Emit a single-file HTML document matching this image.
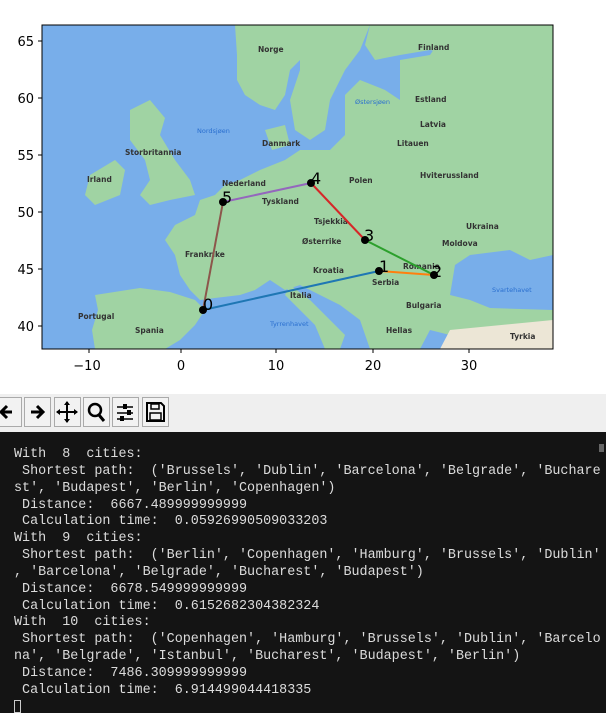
<!DOCTYPE html>
<html><head><meta charset="utf-8"><style>
html,body{margin:0;padding:0;width:606px;height:713px;overflow:hidden;background:#fff;font-family:"DejaVu Sans","Liberation Sans",sans-serif}
#tb{position:absolute;left:0;top:394px;width:606px;height:38px;background:#efefef}
.b{position:absolute;top:3px;width:27px;height:30px;border:1px solid #aaa;background:#f2f2f2;box-sizing:border-box}
#term{position:absolute;left:0;top:432px;width:606px;height:281px;background:#141414;color:#dcdcdc;font-family:"Liberation Mono","DejaVu Sans Mono",monospace;font-size:13.4px;line-height:16.85px;white-space:pre;padding:15px 0 0 14px;box-sizing:border-box}
#sb{position:absolute;right:2px;top:444px;width:5px;height:8px;background:#666}
#cur{display:inline-block;width:7px;height:13px;border:1px solid #ccc;box-sizing:border-box;vertical-align:-2px}
</style></head><body>
<svg width="606" height="394" style="position:absolute;left:0;top:0" font-family="DejaVu Sans, sans-serif">
<defs><clipPath id="c"><rect x="42" y="25" width="511" height="324"/></clipPath></defs>
<g clip-path="url(#c)">
<rect x="42" y="25" width="511" height="324" fill="#78aeea"/>
<g fill="#a0d3a3">
<polygon points="95,295 140,288 170,292 195,300 205,310 195,325 180,340 165,349 95,349 92,330 98,310"/>
<polygon points="165,240 175,225 195,215 200,200 215,195 225,185 240,180 260,170 285,160 300,150 330,150 345,135 345,95 360,80 385,90 400,100 400,60 430,55 440,40 470,45 500,60 520,70 553,80 553,255 530,260 510,250 470,255 455,265 450,295 470,300 490,308 553,310 553,349 520,349 450,335 430,330 420,349 370,349 360,320 340,305 320,295 300,285 285,290 270,280 255,290 240,295 215,298 200,300 190,290 180,275 175,255"/>
<polygon points="290,285 310,300 330,320 345,335 340,349 325,349 315,325 295,305 285,295"/>
<polygon points="235,25 300,25 310,40 300,60 290,70 285,95 275,110 260,105 245,95 237,80 237,55"/>
<polygon points="300,25 370,25 360,50 345,70 330,100 325,130 310,140 295,130 290,100 300,70"/>
<polygon points="370,25 553,25 553,80 470,60 430,50 400,55 375,60 365,45"/>
<polygon points="265,130 285,125 290,145 272,150"/>
<polygon points="130,110 150,100 165,118 160,135 175,160 190,180 195,195 170,200 150,205 140,195 150,180 145,160 130,140"/>
<polygon points="90,175 115,160 125,170 120,195 95,205 85,195"/>
</g>
<polygon points="450,330 553,320 553,349 440,349" fill="#ece6d6"/>
<g font-size="7.5" font-weight="bold" fill="#333">
<text x="258" y="52">Norge</text><text x="418" y="50">Finland</text><text x="415" y="102">Estland</text><text x="420" y="127">Latvia</text><text x="397" y="146">Litauen</text>
<text x="125" y="155">Storbritannia</text><text x="87" y="182">Irland</text><text x="262" y="146">Danmark</text><text x="349" y="183">Polen</text><text x="420" y="178">Hviterussland</text>
<text x="222" y="186">Nederland</text><text x="262" y="204">Tyskland</text><text x="185" y="257">Frankrike</text><text x="466" y="229">Ukraina</text><text x="442" y="246">Moldova</text>
<text x="314" y="224">Tsjekkia</text><text x="302" y="244">Østerrike</text><text x="313" y="273">Kroatia</text><text x="290" y="298">Italia</text><text x="406" y="308">Bulgaria</text>
<text x="78" y="319">Portugal</text><text x="135" y="333">Spania</text><text x="386" y="333">Hellas</text><text x="510" y="339">Tyrkia</text><text x="403" y="269">Romania</text><text x="372" y="285">Serbia</text>
</g>
<g font-size="6.5" fill="#2a6fcf"><text x="197" y="133">Nordsjøen</text><text x="355" y="104">Østersjøen</text><text x="492" y="292">Svartehavet</text><text x="270" y="326">Tyrrenhavet</text></g>
</g>
<rect x="42" y="25" width="511" height="324" fill="none" stroke="#000" stroke-width="1"/>
<g stroke-width="2" fill="none">
<line x1="203" y1="310" x2="379" y2="271" stroke="#1f77b4"/>
<line x1="379" y1="271" x2="434" y2="275" stroke="#ff7f0e"/>
<line x1="434" y1="275" x2="365" y2="240" stroke="#2ca02c"/>
<line x1="365" y1="240" x2="311" y2="183" stroke="#d62728"/>
<line x1="311" y1="183" x2="223" y2="202" stroke="#9467bd"/>
<line x1="223" y1="202" x2="203" y2="310" stroke="#8c564b"/>
</g>
<g fill="#000"><circle cx="203" cy="310" r="4"/><circle cx="379" cy="271" r="4"/><circle cx="434" cy="275" r="4"/><circle cx="365" cy="240" r="4"/><circle cx="311" cy="183" r="4"/><circle cx="223" cy="202" r="4"/></g>
<g font-size="16" fill="#000"><text x="203" y="310">0</text><text x="379" y="272">1</text><text x="432" y="277">2</text><text x="364" y="241">3</text><text x="311" y="184">4</text><text x="222" y="203">5</text></g>
<g stroke="#000" stroke-width="1"><line x1="89" y1="349" x2="89" y2="353"/><line x1="181" y1="349" x2="181" y2="353"/><line x1="276" y1="349" x2="276" y2="353"/><line x1="373" y1="349" x2="373" y2="353"/><line x1="469" y1="349" x2="469" y2="353"/>
<line x1="38" y1="41" x2="42" y2="41"/><line x1="38" y1="98" x2="42" y2="98"/><line x1="38" y1="155" x2="42" y2="155"/><line x1="38" y1="212" x2="42" y2="212"/><line x1="38" y1="269" x2="42" y2="269"/><line x1="38" y1="326" x2="42" y2="326"/></g>
<g font-size="13" fill="#000" text-anchor="middle"><text x="87" y="370">−10</text><text x="181" y="370">0</text><text x="276" y="370">10</text><text x="373" y="370">20</text><text x="469" y="370">30</text></g>
<g font-size="13" fill="#000" text-anchor="end"><text x="34" y="46">65</text><text x="34" y="103">60</text><text x="34" y="160">55</text><text x="34" y="217">50</text><text x="34" y="274">45</text><text x="34" y="331">40</text></g>
</svg>
<div id="tb">
<div class="b" style="left:-5px"><svg width="24" height="28"><path d="M16 14H6M11 8L5 14L11 20" stroke="#000" stroke-width="3" fill="none"/></svg></div>
<div class="b" style="left:24px"><svg width="24" height="28"><path d="M6 14H17M12 8L18 14L12 20" stroke="#000" stroke-width="3" fill="none"/></svg></div>
<div class="b" style="left:54px"><svg width="24" height="28"><path d="M12 4V24M2 14H22" stroke="#000" stroke-width="2"/><path d="M12 3L9 7H15ZM12 25L9 21H15ZM1 14L5 11V17ZM23 14L19 11V17Z" fill="#000"/></svg></div>
<div class="b" style="left:83px"><svg width="24" height="28"><circle cx="11" cy="12" r="6" stroke="#000" stroke-width="2.5" fill="none"/><path d="M15 17L20 23" stroke="#000" stroke-width="3"/></svg></div>
<div class="b" style="left:112px"><svg width="24" height="28"><path d="M4 9H20M4 15H20M4 21H20" stroke="#000" stroke-width="1.5"/><rect x="10" y="6" width="4" height="5"/><rect x="14" y="12" width="4" height="5"/><rect x="7" y="18" width="4" height="5"/></svg></div>
<div class="b" style="left:142px"><svg width="24" height="28"><path d="M4 5H18L21 8V23H4Z" stroke="#000" stroke-width="2" fill="none"/><rect x="8" y="6" width="8" height="5" stroke="#000" stroke-width="1.5" fill="none"/><rect x="7" y="15" width="11" height="7" stroke="#000" stroke-width="1.5" fill="none"/></svg></div>
</div>
<div id="term">With  8  cities:
 Shortest path:  ('Brussels', 'Dublin', 'Barcelona', 'Belgrade', 'Buchare
st', 'Budapest', 'Berlin', 'Copenhagen')
 Distance:  6667.489999999999
 Calculation time:  0.05926990509033203
With  9  cities:
 Shortest path:  ('Berlin', 'Copenhagen', 'Hamburg', 'Brussels', 'Dublin'
, 'Barcelona', 'Belgrade', 'Bucharest', 'Budapest')
 Distance:  6678.549999999999
 Calculation time:  0.6152682304382324
With  10  cities:
 Shortest path:  ('Copenhagen', 'Hamburg', 'Brussels', 'Dublin', 'Barcelo
na', 'Belgrade', 'Istanbul', 'Bucharest', 'Budapest', 'Berlin')
 Distance:  7486.309999999999
 Calculation time:  6.914499044418335
<span id="cur"></span></div>
<div id="sb"></div>
</body></html>
